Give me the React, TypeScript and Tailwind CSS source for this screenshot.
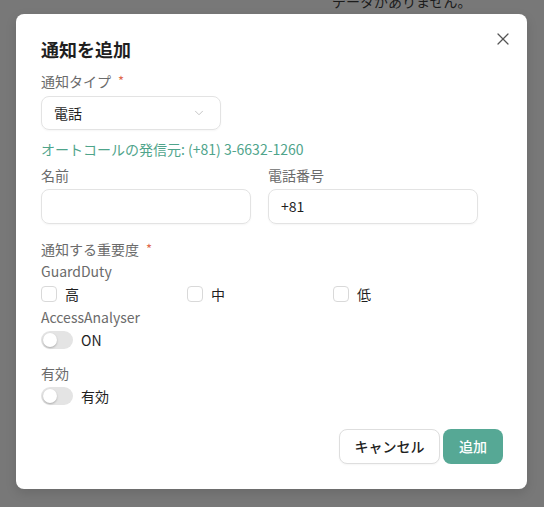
import { ChevronDown, X } from 'lucide-react';

const font = { fontFamily: '"Noto Sans CJK JP", "Noto Sans", sans-serif' };

function Label({ text, required = false }: { text: string; required?: boolean }) {
  return (
    <div className="h-[22px] flex items-center text-[14px] text-[#6b6b6b]">
      {text}
      {required && <span className="ml-[7px] text-[#e0694d] text-[13px]">*</span>}
    </div>
  );
}

function Toggle({ label }: { label: string }) {
  return (
    <div className="flex items-center h-[22px] gap-[8px]">
      <div className="relative w-[32px] h-[18px] rounded-full bg-[#e4e4e4]">
        <div className="absolute left-[2px] top-[2px] w-[14px] h-[14px] rounded-full bg-white shadow-[0_1px_2px_rgba(0,0,0,0.25)]" />
      </div>
      <span className="text-[14px] text-[#1f1f1f]">{label}</span>
    </div>
  );
}

function Check({ label }: { label: string }) {
  return (
    <div className="flex items-center gap-[8px] w-[146px]">
      <div className="w-[16px] h-[16px] rounded-[4px] border border-[#d9d9d9] bg-white" />
      <span className="text-[14px] text-[#1f1f1f]">{label}</span>
    </div>
  );
}

export default function App() {
  return (
    <div className="relative w-[544px] h-[507px] bg-[#787878] overflow-hidden" style={font}>
      <div className="absolute left-[332px] top-[-9px] text-[14px] text-[#1c1c1c]">データがありません。</div>

      <div className="absolute left-[16px] top-[14px] w-[511px] h-[475px] bg-white rounded-[8px] px-[25px] pt-[23px] shadow-[0_4px_12px_rgba(0,0,0,0.12)]">
        <button className="absolute left-[477px] top-[15px] text-[#555]">
          <X size={20} strokeWidth={1.5} />
        </button>

        <div className="h-[24px] flex items-center text-[18px] font-bold text-[#1f1f1f]">通知を追加</div>

        <div className="mt-[9px]">
          <Label text="通知タイプ" required />
        </div>
        <div className="mt-[4px] w-[180px] h-[34px] rounded-[8px] border border-[#e3e3e3] flex items-center justify-between pl-[12px] pr-[14px] shadow-[0_1px_2px_rgba(0,0,0,0.04)]">
          <span className="text-[14px] text-[#1f1f1f]">電話</span>
          <ChevronDown size={14} strokeWidth={1.5} className="text-[#bdbdbd]" />
        </div>

        <div className="mt-[8px] h-[22px] flex items-center text-[14px] text-[#4fa48b]">
          オートコールの発信元: (+81) 3-6632-1260
        </div>

        <div className="mt-[4px] flex gap-[17px]">
          <div className="w-[210px]">
            <Label text="名前" />
            <div className="mt-[3px] h-[35px] rounded-[8px] border border-[#e3e3e3] shadow-[0_1px_2px_rgba(0,0,0,0.04)]" />
          </div>
          <div className="w-[210px]">
            <Label text="電話番号" />
            <div className="mt-[3px] h-[35px] rounded-[8px] border border-[#e3e3e3] flex items-center px-[12px] text-[14px] text-[#1f1f1f] shadow-[0_1px_2px_rgba(0,0,0,0.04)]">
              +81
            </div>
          </div>
        </div>

        <div className="mt-[14px]">
          <Label text="通知する重要度" required />
        </div>
        <Label text="GuardDuty" />
        <div className="mt-[1px] h-[22px] flex items-center">
          <Check label="高" />
          <Check label="中" />
          <Check label="低" />
        </div>

        <div className="mt-[1px]">
          <Label text="AccessAnalyser" />
        </div>
        <div className="mt-[1px]">
          <Toggle label="ON" />
        </div>

        <div className="mt-[11px]">
          <Label text="有効" />
        </div>
        <div className="mt-[1px]">
          <Toggle label="有効" />
        </div>

        <div className="mt-[22px] flex justify-end gap-[3px] -mr-[1px]">
          <button className="h-[35px] w-[101px] rounded-[8px] border border-[#dedede] bg-white text-[14px] font-medium text-[#1f1f1f] shadow-[0_1px_2px_rgba(0,0,0,0.04)]">
            キャンセル
          </button>
          <button className="h-[35px] w-[60px] rounded-[8px] bg-[#56a895] text-[14px] font-medium text-white">
            追加
          </button>
        </div>
      </div>
    </div>
  );
}
